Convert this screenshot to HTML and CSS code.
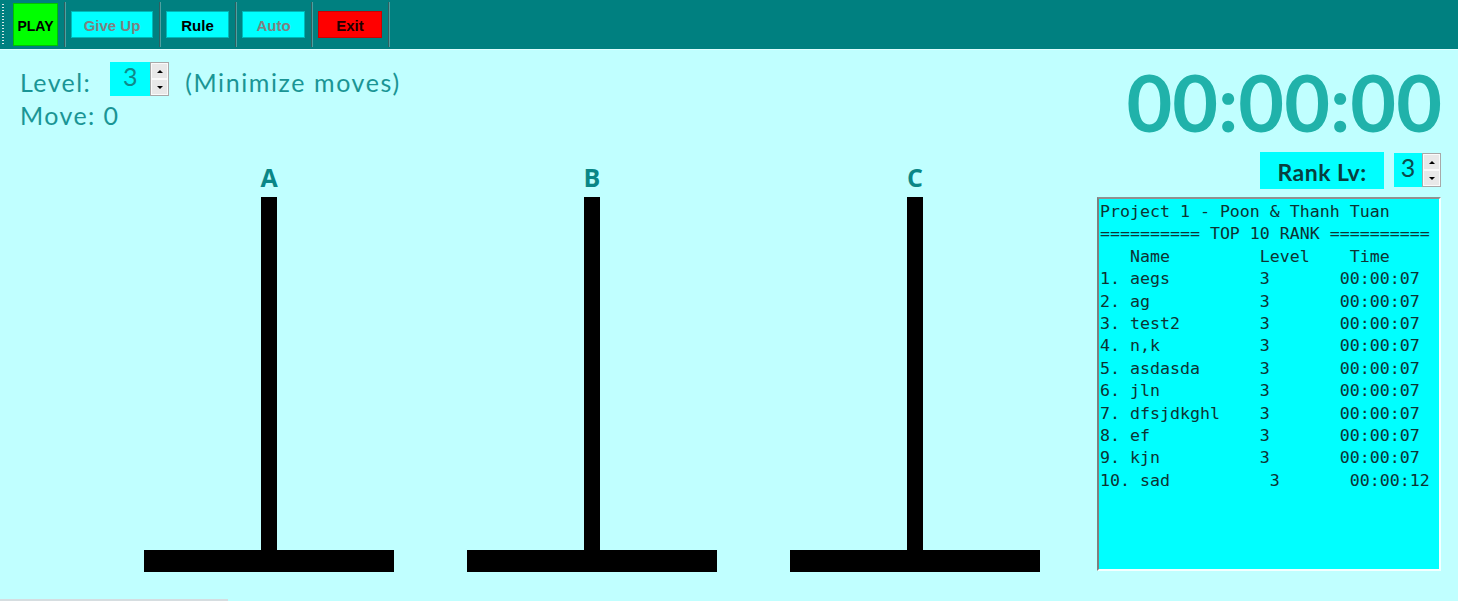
FILE: index.html
```html
<!DOCTYPE html>
<html lang="en">
<head>
    <meta charset="UTF-8">
    <title>Tower of Hanoi</title>
    <link rel="stylesheet" href="styles.css">
</head>
<body>

<div class="toolbar">
    <div class="grip"></div>
    <div class="tool"><button class="btn btn-play">PLAY</button></div>
    <div class="tool"><button class="btn btn-off btn-giveup">Give Up</button></div>
    <div class="tool"><button class="btn btn-rule">Rule</button></div>
    <div class="tool"><button class="btn btn-off btn-auto">Auto</button></div>
    <div class="tool"><button class="btn btn-exit">Exit</button></div>
</div>

<div class="main">
    <div class="game">
        <div class="info">
            <div class="level-row">
                <span class="label">Level:</span>
                <div class="spin spin-level">
                    <span class="spin-value">3</span>
                    <div class="spin-arrows">
                        <span class="arrow up"></span>
                        <span class="arrow down"></span>
                    </div>
                </div>
                <span class="label hint">(Minimize moves)</span>
            </div>
            <div class="label move">Move: 0</div>
        </div>

        <div class="towers">
            <div class="tower">
                <div class="tower-name">A</div>
                <div class="pole"></div>
                <div class="base"></div>
            </div>
            <div class="tower">
                <div class="tower-name">B</div>
                <div class="pole"></div>
                <div class="base"></div>
            </div>
            <div class="tower">
                <div class="tower-name">C</div>
                <div class="pole"></div>
                <div class="base"></div>
            </div>
        </div>
    </div>

    <div class="side">
        <div class="timer">00:00:00</div>
        <div class="rank-row">
            <div class="rank-label">Rank Lv:</div>
            <div class="spin spin-rank">
                <span class="spin-value">3</span>
                <div class="spin-arrows">
                    <span class="arrow up"></span>
                    <span class="arrow down"></span>
                </div>
            </div>
        </div>
<pre class="ranking">Project 1 - Poon &amp; Thanh Tuan
========== TOP 10 RANK ==========
   Name         Level    Time
1. aegs         3       00:00:07
2. ag           3       00:00:07
3. test2        3       00:00:07
4. n,k          3       00:00:07
5. asdasda      3       00:00:07
6. jln          3       00:00:07
7. dfsjdkghl    3       00:00:07
8. ef           3       00:00:07
9. kjn          3       00:00:07
10. sad          3       00:00:12</pre>
    </div>
</div>

<div class="status"></div>

</body>
</html>
```

FILE: styles.css
```css
body {
    margin: 0;
    height: 601px;
    overflow: hidden;
    background-color: #c0ffff;
    font-family: "Lato", "Noto Sans", sans-serif;
    display: flex;
    flex-direction: column;
}

/* barra de herramientas */
.toolbar {
    height: 49px;
    background-color: #008080;
    display: flex;
    align-items: center;
    border-bottom: 1px solid #dcffff;
    flex-shrink: 0;
}
.grip {
    width: 2px;
    height: 42px;
    margin-left: 2px;
    margin-right: 3px;
    background-image: linear-gradient(#d8e8e8 50%, transparent 50%);
    background-size: 2px 3px;
}
.tool {
    display: flex;
    align-items: center;
    height: 45px;
    padding: 0 6px;
    border-right: 1px solid #2f5f5f;
    box-shadow: 1px 0 0 #4fa0a0;
}
.tool:first-of-type {
    padding-left: 8px;
}
.btn {
    border: 1px solid #00b8b8;
    font-family: "Liberation Sans", Arial, sans-serif;
    font-weight: bold;
    font-size: 15px;
    height: 27px;
    padding: 2px 0 0;
    background: #00ffff;
    color: #000;
}
.btn-play {
    width: 45px;
    height: 43px;
    font-size: 14px;
    background: #00ff00;
    border-color: #00c000;
}
.btn-giveup { width: 82px; }
.btn-rule, .btn-auto { width: 63px; }
.btn-off { color: #808080; }
.btn-exit {
    width: 64px;
    background: #ff0000;
    border-color: #d00000;
    color: #200000;
}

/* zona principal */
.main {
    flex: 1;
    display: flex;
}
.game {
    flex: 1;
}
.info {
    padding: 12px 0 0 20px;
}
.label {
    color: #1a9595;
    font-size: 25px;
    letter-spacing: 1.4px;
}
.level-row {
    display: flex;
    align-items: center;
    height: 34px;
}
.level-row .label {
    padding-top: 5px;
}
.hint {
    margin-left: 16px;
    letter-spacing: 1.6px;
}
.move {
    margin-top: 2px;
    line-height: 34px;
}

.spin {
    display: flex;
    height: 34px;
}
.spin-level {
    margin-left: 19px;
}
.spin-value {
    background: #00ffff;
    color: #0f8a8a;
    font-size: 25px;
    width: 40px;
    text-align: center;
    line-height: 28px;
}
.spin-arrows {
    width: 19px;
    display: flex;
    flex-direction: column;
    border: 1px solid #a8a8a8;
    box-sizing: border-box;
    background: #e8e8e8;
}
.arrow {
    flex: 1;
    display: flex;
    align-items: center;
    justify-content: center;
    border: 1px solid #fafafa;
}
.arrow::after {
    content: "";
    border-left: 3px solid transparent;
    border-right: 3px solid transparent;
}
.arrow.up::after { border-bottom: 3px solid #000; }
.arrow.down::after { border-top: 3px solid #000; }

/* torres */
.towers {
    display: flex;
    gap: 73px;
    padding-left: 144px;
    margin-top: 32px;
}
.tower {
    width: 250px;
    display: flex;
    flex-direction: column;
    align-items: center;
}
.tower-name {
    color: #0a8686;
    font-family: "Open Sans", sans-serif;
    font-weight: bold;
    font-size: 25px;
    line-height: 26px;
    height: 33px;
}
.pole {
    width: 16px;
    height: 353px;
    background: #000;
}
.base {
    width: 250px;
    height: 22px;
    background: #000;
}

/* columna derecha */
.side {
    width: 344px;
    margin-right: 17px;
    display: flex;
    flex-direction: column;
    align-items: flex-end;
}
.timer {
    color: #20b2aa;
    font-family: "Lato", sans-serif;
    font-weight: bold;
    font-size: 79px;
    line-height: 84px;
    margin-top: 10px;
    margin-right: -1px;
    white-space: nowrap;
}
.rank-row {
    display: flex;
    gap: 10px;
    margin-top: 8px;
}
.rank-label {
    background: #00ffff;
    color: #083f3f;
    font-weight: bold;
    font-size: 23px;
    letter-spacing: 0.5px;
    width: 124px;
    height: 37px;
    line-height: 40px;
    text-align: center;
}
.spin-rank {
    height: 34px;
    margin-top: 1px;
}
.spin-rank .spin-value {
    width: 28px;
    color: #0b4c4c;
    font-size: 25px;
}
.ranking {
    width: 344px;
    height: 374px;
    margin: 8px 0 0;
    box-sizing: border-box;
    background: #00ffff;
    border-left: 2px solid #808080;
    border-top: 2px solid #909090;
    border-right: 2px solid #f4ffff;
    border-bottom: 2px solid #f4ffff;
    padding: 2px 0 0 1px;
    font-family: "DejaVu Sans Mono", monospace;
    font-size: 16.6px;
    line-height: 22.4px;
    color: #0d3333;
    overflow: hidden;
}

.status {
    width: 228px;
    height: 2px;
    background: #d6dde0;
    flex-shrink: 0;
}
```
